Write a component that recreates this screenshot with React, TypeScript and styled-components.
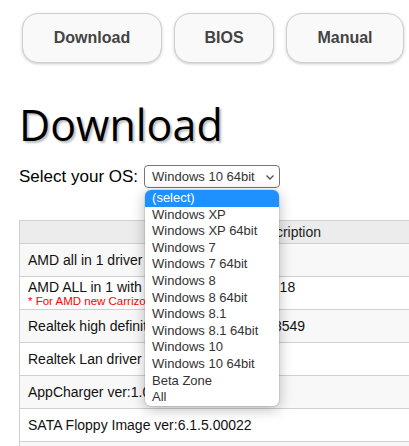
import React from 'react';
import styled, { createGlobalStyle } from 'styled-components';

const GlobalStyle = createGlobalStyle`
  html, body {
    margin: 0;
    padding: 0;
    background: #fff;
    overflow: hidden;
  }
  body {
    font-family: "Liberation Sans", Arial, sans-serif;
    color: #000;
  }
`;

const Page = styled.div`
  width: 409px;
  height: 446px;
  overflow: hidden;
  padding: 13px 0 0 19px;
  box-sizing: border-box;
`;

const Nav = styled.nav`
  display: flex;
  gap: 12px;
  padding-left: 3px;
`;

const NavButton = styled.button<{ $w: number }>`
  width: ${(p) => p.$w}px;
  height: 50px;
  padding: 0;
  border: 1px solid #cfcfcf;
  border-radius: 16px;
  background: #f9f9f9;
  box-shadow: 0 1px 3px rgba(0, 0, 0, 0.22);
  font-family: "Liberation Sans", Arial, sans-serif;
  font-size: 16px;
  font-weight: bold;
  color: #444;
  white-space: nowrap;
  flex: none;
`;

const Title = styled.h1`
  margin: 33px 0 0;
  font-family: "Open Sans", sans-serif;
  font-size: 43px;
  font-weight: 400;
  line-height: 58px;
  color: #000;
  text-shadow: 2px 2px 2px rgba(0, 0, 0, 0.25);
`;

const OsRow = styled.div`
  display: flex;
  align-items: center;
  gap: 6px;
  margin-top: 11px;
  font-size: 17px;
  line-height: 20px;
`;

const SelectWrap = styled.div`
  position: relative;
`;

const SelectBox = styled.div`
  display: flex;
  align-items: center;
  justify-content: space-between;
  width: 136px;
  height: 23px;
  box-sizing: border-box;
  padding: 0 4px 0 7px;
  border: 1px solid #767676;
  border-radius: 4px;
  background: #fff;
  font-size: 13px;
  color: #333;
`;

const Options = styled.ul`
  position: absolute;
  top: 25px;
  left: 1px;
  width: 134px;
  margin: 0;
  padding: 0;
  list-style: none;
  background: #fff;
  border-radius: 6px;
  box-shadow: 0 3px 14px rgba(0, 0, 0, 0.28), 0 0 0 1px rgba(0, 0, 0, 0.08);
  overflow: hidden;
  z-index: 5;
`;

const Option = styled.li<{ $active?: boolean }>`
  height: 16.6px;
  line-height: 16.6px;
  padding-left: 7px;
  font-size: 13px;
  white-space: nowrap;
  background: ${(p) => (p.$active ? '#1e90ff' : 'transparent')};
  color: ${(p) => (p.$active ? '#fff' : '#333')};
`;

const Table = styled.table`
  width: 534px;
  margin-top: 32px;
  border-collapse: collapse;
  font-size: 14px;
`;

const Th = styled.th`
  height: 22px;
  padding: 0 8px;
  background: #ececec;
  border: 1px solid #cfcfcf;
  font-weight: 400;
  color: #222;
  text-align: center;
`;

const Tr = styled.tr<{ $shade?: boolean }>`
  background: ${(p) => (p.$shade ? '#f8f8f8' : '#fff')};
`;

const Td = styled.td`
  height: 32px;
  padding: 0 8px;
  border: 1px solid #d0d0d0;
  vertical-align: middle;
  white-space: nowrap;
  line-height: 16px;
  color: #111;
`;

const Note = styled.div`
  font-size: 11.5px;
  line-height: 13px;
  color: #ff0000;
`;

const navItems = [
  { label: 'Download', w: 140 },
  { label: 'BIOS', w: 100 },
  { label: 'Manual', w: 118 },
];

const osList = [
  '(select)',
  'Windows XP',
  'Windows XP 64bit',
  'Windows 7',
  'Windows 7 64bit',
  'Windows 8',
  'Windows 8 64bit',
  'Windows 8.1',
  'Windows 8.1 64bit',
  'Windows 10',
  'Windows 10 64bit',
  'Beta Zone',
  'All',
];

const rows: { text: string; note?: string }[] = [
  { text: 'AMD all in 1 driver ver:14.4' },
  { text: 'AMD ALL in 1 with VGA driver ver:15.20.18', note: '* For AMD new Carrizo platform only' },
  { text: 'Realtek high definition audio ver:6.0.01.8549' },
  { text: 'Realtek Lan driver ver:7.89' },
  { text: 'AppCharger ver:1.0.0.0' },
  { text: 'SATA Floppy Image ver:6.1.5.00022' },
  { text: '' },
];

function Chevron() {
  return (
    <svg width="10" height="10" viewBox="0 0 10 10">
      <path d="M1.5 3.5 L5 7 L8.5 3.5" fill="none" stroke="#555" strokeWidth="1.4" />
    </svg>
  );
}

export default function App() {
  return (
    <Page>
      <GlobalStyle />
      <Nav>
        {navItems.map((n) => (
          <NavButton key={n.label} $w={n.w}>
            {n.label}
          </NavButton>
        ))}
      </Nav>
      <Title>Download</Title>
      <OsRow>
        <span>Select your OS:</span>
        <SelectWrap>
          <SelectBox>
            <span>Windows 10 64bit</span>
            <Chevron />
          </SelectBox>
          <Options>
            {osList.map((os, i) => (
              <Option key={os} $active={i === 0}>
                {os}
              </Option>
            ))}
          </Options>
        </SelectWrap>
      </OsRow>
      <Table>
        <thead>
          <tr>
            <Th>Description</Th>
          </tr>
        </thead>
        <tbody>
          {rows.map((r, i) => (
            <Tr key={i} $shade={i % 2 === 0}>
              <Td>
                {r.text}
                {r.note && <Note>{r.note}</Note>}
              </Td>
            </Tr>
          ))}
        </tbody>
      </Table>
    </Page>
  );
}
